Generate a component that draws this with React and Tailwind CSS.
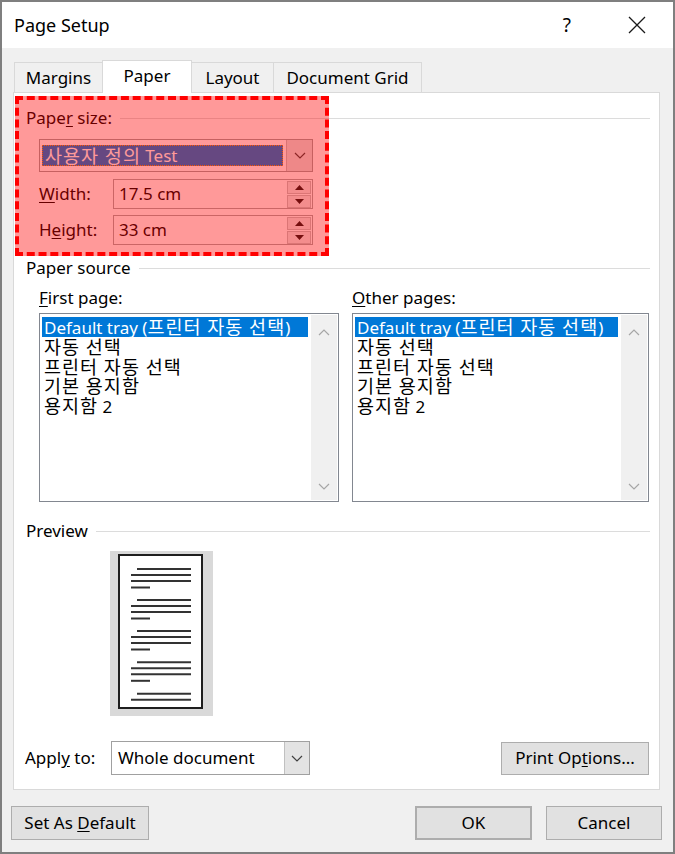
import { useState } from 'react'

const font = "font-['Noto_Sans','Noto_Sans_CJK_KR',sans-serif]"

const trays = ['Default tray (프린터 자동 선택)', '자동 선택', '프린터 자동 선택', '기본 용지함', '용지함 2']

// Hangul runs are set a bit larger so they take the width Malgun Gothic gives
function Mixed({ text }) {
  const parts = text.split(/([\uac00-\ud7a3]+(?:\s+[\uac00-\ud7a3]+)*)/)
  return parts.map((p, i) =>
    /[\uac00-\ud7a3]/.test(p) ? (
      <span key={i} className="text-[18.5px] tracking-[1px]">{p}</span>
    ) : (
      <span key={i}>{p}</span>
    )
  )
}

function GroupHeader({ children, className = '' }) {
  return (
    <div className={'flex h-[20px] items-center ' + className}>
      <span className="whitespace-nowrap">{children}</span>
      <div className="ml-[8px] h-px flex-1 bg-[#dcdcdc]" />
    </div>
  )
}

function Chevron({ up = false, color = '#a6a6a6' }) {
  return (
    <svg width="12" height="7" viewBox="0 0 12 7">
      <polyline
        points={up ? '1,6 6,1 11,6' : '1,1 6,6 11,1'}
        fill="none"
        stroke={color}
        strokeWidth="1.2"
      />
    </svg>
  )
}

function SpinInput({ value }) {
  return (
    <div className="flex h-[30px] w-[200px] items-center border border-[#a8a8a8] bg-white pl-[5px] pr-[1px]">
      <span className="flex-1">{value}</span>
      <div className="flex w-[24px] flex-col gap-px">
        <div className="flex h-[13px] items-center justify-center border border-[#c4c4c4] bg-[#ececec]">
          <svg width="9" height="5" viewBox="0 0 9 5"><polygon points="0,5 4.5,0 9,5" fill="#1a1a1a" /></svg>
        </div>
        <div className="flex h-[13px] items-center justify-center border border-[#c4c4c4] bg-[#ececec]">
          <svg width="9" height="5" viewBox="0 0 9 5"><polygon points="0,0 4.5,5 9,0" fill="#1a1a1a" /></svg>
        </div>
      </div>
    </div>
  )
}

function TrayList({ width }) {
  const [selected, setSelected] = useState(0)
  return (
    <div className={'flex h-[189px] border border-[#828790] bg-white ' + width}>
      <div className="flex-1 pl-[2px] pr-[3px] pt-[3px]">
        {trays.map((t, i) => (
          <div
            key={t}
            onClick={() => setSelected(i)}
            className={
              'h-[19.75px] whitespace-nowrap pl-[2px] leading-[19.75px] ' +
              (i === selected ? 'bg-[#0078d7] text-white' : 'text-black')
            }
          >
            <Mixed text={t} />
          </div>
        ))}
      </div>
      <div className="my-px mr-px flex w-[26px] flex-col items-center justify-between bg-[#f0f0f0] pb-[10px] pt-[14px]">
        <Chevron up />
        <Chevron />
      </div>
    </div>
  )
}

function PreviewPage() {
  const groups = [15, 46, 77, 108.3]
  return (
    <svg width="85" height="155" viewBox="0 0 85 155">
      <rect x="1" y="1" width="83" height="153" fill="#fff" stroke="#1e1e1e" strokeWidth="2" />
      {groups.map((g) => (
        <g key={g} stroke="#333" strokeWidth="2">
          <line x1="19" y1={g} x2="73" y2={g} />
          <line x1="13" y1={g + 6} x2="73" y2={g + 6} />
          <line x1="13" y1={g + 12} x2="73" y2={g + 12} />
          <line x1="13" y1={g + 18.5} x2="32" y2={g + 18.5} />
        </g>
      ))}
      <g stroke="#333" strokeWidth="2">
        <line x1="19" y1="139.7" x2="73" y2="139.7" />
        <line x1="13" y1="145.7" x2="73" y2="145.7" />
      </g>
    </svg>
  )
}

function Button({ children, className = '' }) {
  return (
    <button className={'flex items-center justify-center border border-[#adadad] bg-[#e1e1e1] ' + className}>
      <span>{children}</span>
    </button>
  )
}

export default function App() {
  const tabs = [
    { name: 'Margins', w: 'w-[89px]' },
    { name: 'Paper', w: 'w-[90px]', active: true },
    { name: 'Layout', w: 'w-[83px]' },
    { name: 'Document Grid', w: 'w-[149px]' },
  ]

  return (
    <div className={'flex h-[854px] w-[675px] flex-col border-2 border-[#7f7f7f] bg-[#f0f0f0] text-[17px] text-black ' + font}>
      {/* title bar */}
      <div className="flex h-[46px] items-center bg-white pl-[12px]">
        <span className="text-[18px]">Page Setup</span>
        <span className="ml-auto mr-[57px] text-[19px]">?</span>
        <svg width="18" height="18" viewBox="0 0 18 18" className="mr-[27px]">
          <path d="M1 1 L17 17 M17 1 L1 17" stroke="#1a1a1a" strokeWidth="1.3" />
        </svg>
      </div>

      {/* tabs */}
      <div className="relative z-10 mt-[12px] -mb-px flex items-end pl-[12px]">
        {tabs.map((t) =>
          t.active ? (
            <div
              key={t.name}
              className={'-ml-px flex h-[33px] items-center justify-center border border-b-0 border-[#d9d9d9] bg-white pb-[2px] ' + t.w}
            >
              {t.name}
            </div>
          ) : (
            <div
              key={t.name}
              className={'-ml-px mb-px flex h-[30px] items-center justify-center border border-b-0 border-[#d9d9d9] bg-[#f0f0f0] first:ml-0 ' + t.w}
            >
              {t.name}
            </div>
          )
        )}
      </div>

      {/* panel */}
      <div className="relative ml-[11px] w-[647px] border border-[#d9d9d9] bg-white pb-[14px] pl-[12px] pr-[9px] pt-[15px]">
        <GroupHeader>
          Pape<span className="underline underline-offset-2">r</span> size:
        </GroupHeader>

        <div className="ml-[13px] mt-[11px] flex h-[33px] w-[274px] border border-[#a0a0a0] bg-white">
          <div className="flex flex-1 items-center pl-[2px] pr-[3px]">
            <div className="flex h-[21px] flex-1 items-center whitespace-pre border border-dotted border-[#ff8c00] bg-[#0078d7] pl-[2px] text-white">
              <Mixed text="사용자 정의 Test" />
            </div>
          </div>
          <div className="flex w-[26px] items-center justify-center border-l border-[#c0c0c0] bg-[#e3e3e3]">
            <Chevron color="#404040" />
          </div>
        </div>

        <div className="ml-[13px] mt-[7px] flex items-center">
          <span className="w-[74px]">
            <span className="underline underline-offset-2">W</span>idth:
          </span>
          <SpinInput value="17.5 cm" />
        </div>
        <div className="ml-[13px] mt-[6px] flex items-center">
          <span className="w-[74px]">
            H<span className="underline underline-offset-2">e</span>ight:
          </span>
          <SpinInput value="33 cm" />
        </div>

        <GroupHeader className="mt-[13px]">Paper source</GroupHeader>

        <div className="ml-[13px] mt-[10px] flex gap-[13px]">
          <div>
            <div className="h-[20px] leading-[20px]">
              <span className="underline underline-offset-2">F</span>irst page:
            </div>
            <div className="mt-[5px]">
              <TrayList width="w-[300px]" />
            </div>
          </div>
          <div>
            <div className="h-[20px] leading-[20px]">
              <span className="underline underline-offset-2">O</span>ther pages:
            </div>
            <div className="mt-[5px]">
              <TrayList width="w-[297px]" />
            </div>
          </div>
        </div>

        <GroupHeader className="mt-[19px]">Preview</GroupHeader>

        <div className="ml-[84px] mt-[10px] h-[165px] w-[103px] bg-[#d9d9d9] pl-[8px] pt-[3px]">
          <PreviewPage />
        </div>

        <div className="mt-[25px] flex items-center">
          <span className="ml-[-1px] w-[86px]">
            Appl<span className="underline underline-offset-2">y</span> to:
          </span>
          <div className="flex h-[34px] w-[199px] border border-[#a0a0a0] bg-white">
            <div className="flex flex-1 items-center pl-[6px]">Whole document</div>
            <div className="flex w-[25px] items-center justify-center border-l border-[#c0c0c0] bg-[#e3e3e3]">
              <Chevron color="#404040" />
            </div>
          </div>
          <Button className="ml-auto mr-[1px] h-[33px] w-[148px]">
            Print Op<span className="underline underline-offset-2">t</span>ions...
          </Button>
        </div>

        {/* annotation overlay */}
        <div className="pointer-events-none absolute left-[1px] top-[3px] h-[160px] w-[314px] border-4 border-dashed border-[#ff0000] bg-[rgba(255,0,0,0.4)]" />
      </div>

      {/* bottom buttons */}
      <div className="mt-[16px] flex pl-[9px] pr-[11px]">
        <Button className="h-[34px] w-[138px]">
          Set As <span className="underline underline-offset-2">D</span>efault
        </Button>
        <Button className="ml-auto h-[34px] w-[117px] border-2 border-[#0078d7]">OK</Button>
        <Button className="ml-[14px] h-[34px] w-[116px]">Cancel</Button>
      </div>
    </div>
  )
}
